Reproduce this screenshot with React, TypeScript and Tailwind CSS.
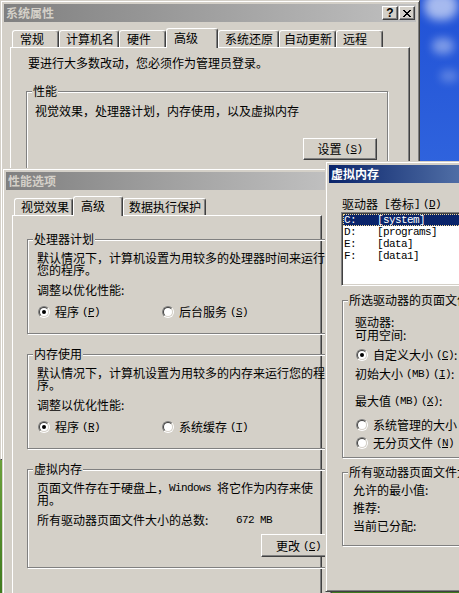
import type { ReactNode } from 'react';

const raised =
  'border border-t-white border-l-white border-r-[#404040] border-b-[#404040] shadow-[inset_-1px_-1px_#808080]';
const sunken =
  'border border-t-[#808080] border-l-[#808080] border-r-white border-b-white shadow-[inset_1px_1px_#404040,inset_-1px_-1px_#d4d0c8]';
// half-width latin text, 6px per character like the bitmap font
const mono = "font-['Liberation_Mono',monospace] text-[11px] leading-[12px] tracking-[-0.6px] align-top";

// pixel X of the classic close button
const closeCells = [
  [0, 1, 6, 7],
  [1, 2, 5, 6],
  [2, 3, 4, 5],
  [3, 4],
  [2, 3, 4, 5],
  [1, 2, 5, 6],
  [0, 1, 6, 7],
];

function Acc({ k }: { k: string }) {
  return (
    <span className={`ml-[3px] ${mono}`}>
      (<span className="underline underline-offset-[1px]">{k}</span>)
    </span>
  );
}

function CapBtn({ children }: { children: ReactNode }) {
  return (
    <div className={`flex h-[14px] w-[16px] items-center justify-center bg-[#d4d0c8] text-black ${raised}`}>
      {children}
    </div>
  );
}

function Win({
  title,
  active,
  help,
  className,
  children,
}: {
  title: string;
  active?: boolean;
  help?: boolean;
  className: string;
  children: ReactNode;
}) {
  return (
    <div
      className={`absolute flex flex-col overflow-hidden border border-t-[#d4d0c8] border-l-[#d4d0c8] border-r-[#404040] border-b-[#404040] bg-[#d4d0c8] p-[3px] shadow-[inset_1px_1px_#fff,inset_-1px_-1px_#808080] ${className}`}
    >
      <div
        className={`flex h-[18px] shrink-0 items-center justify-between pl-[2px] pr-[1px] ${
          active
            ? 'bg-[linear-gradient(to_right,#0a246a,#a6caf0)] text-white'
            : 'bg-[linear-gradient(to_right,#808080,#c0c0c0)] text-[#d4d0c8]'
        }`}
      >
        <span className="font-bold leading-[12px]">{title}</span>
        {help && (
          <div className="flex gap-[1px]">
            <CapBtn>
              <span className="font-['Liberation_Sans',sans-serif] text-[12px] font-bold leading-[10px]">?</span>
            </CapBtn>
            <CapBtn>
              <svg width="8" height="7" viewBox="0 0 8 7" shapeRendering="crispEdges">
                {closeCells.map((row, y) =>
                  row.map((x) => <rect key={`${x}-${y}`} x={x} y={y} width="1" height="1" fill="#000" />)
                )}
              </svg>
            </CapBtn>
          </div>
        )}
      </div>
      {children}
    </div>
  );
}

function Tabs({ items }: { items: { label: string; w: string; sel?: boolean; pl?: string }[] }) {
  return (
    <div className="flex h-[19px] shrink-0 items-start pl-[8px]">
      {items.map((t) => (
        <div
          key={t.label}
          className={`flex shrink-0 rounded-t-[3px] border-t border-l border-r border-t-white border-l-white border-r-[#404040] bg-[#d4d0c8] leading-[12px] shadow-[inset_-1px_0_#808080] ${t.w} ${
            t.sel ? 'relative z-10 h-[20px] pt-[3px]' : 'mt-[2px] h-[17px] pt-[2px]'
          } ${t.pl ?? (t.sel ? 'pl-[7px]' : 'pl-[6px]')}`}
        >
          {t.label}
        </div>
      ))}
    </div>
  );
}

function Group({ label, className, children }: { label: string; className: string; children: ReactNode }) {
  return (
    <div className={`relative border border-[#808080] shadow-[inset_1px_1px_#fff,1px_1px_#fff] ${className}`}>
      <span className="absolute left-[5px] top-[-7px] whitespace-nowrap bg-[#d4d0c8] px-[1px] leading-[12px]">
        {label}
      </span>
      {children}
    </div>
  );
}

function Radio({ checked }: { checked?: boolean }) {
  return (
    <span className="relative ml-[1px] inline-block h-[12px] w-[12px] shrink-0 rounded-full border border-t-[#808080] border-l-[#808080] border-r-white border-b-white">
      <span className="absolute inset-0 flex items-center justify-center rounded-full border border-t-[#404040] border-l-[#404040] border-r-[#d4d0c8] border-b-[#d4d0c8] bg-white">
        {checked && <span className="h-[4px] w-[4px] rounded-full bg-black" />}
      </span>
    </span>
  );
}

function Btn({ className, children }: { className: string; children: ReactNode }) {
  return (
    <div className={`flex shrink-0 items-center justify-center bg-[#d4d0c8] leading-[12px] ${raised} ${className}`}>
      {children}
    </div>
  );
}

function RadioPair({ a, b }: { a: ReactNode; b: ReactNode }) {
  return (
    <div className="mt-[10px] flex h-[12px] items-center leading-[12px]">
      <div className="flex w-[124px] items-center gap-[5px]">
        <Radio checked />
        <span>{a}</span>
      </div>
      <div className="flex items-center gap-[5px]">
        <Radio />
        <span>{b}</span>
      </div>
    </div>
  );
}

export default function App() {
  return (
    <div className="relative h-[593px] w-[459px] overflow-hidden bg-[linear-gradient(to_bottom,#2152d6_0%,#3d74e4_55%,#6a9f3a_78%,#3f7a1e_100%)] font-['Noto_Sans_CJK_SC',sans-serif] text-[12px] text-black">
      <div className="absolute left-[424px] top-[-8px] h-[28px] w-[34px] rounded-full bg-white/60 blur-[5px]" />
      <div className="absolute left-[432px] top-[38px] h-[16px] w-[22px] rounded-full bg-white/40 blur-[4px]" />
      <div className="absolute left-[440px] top-[70px] h-[12px] w-[18px] rounded-full bg-white/25 blur-[4px]" />

      {/* 系统属性 */}
      <Win title="系统属性" help className="left-0 top-0 h-[460px] w-[420px]">
        <div className="mt-[6px] flex flex-1 flex-col">
          <Tabs
            items={[
              { label: '常规', w: 'w-[47px]', pl: 'pl-[7px]' },
              { label: '计算机名', w: 'w-[60px]' },
              { label: '硬件', w: 'w-[47px]', pl: 'pl-[7px]' },
              { label: '高级', w: 'w-[52px]', sel: true },
              { label: '系统还原', w: 'w-[61px]' },
              { label: '自动更新', w: 'w-[57px]', pl: 'pl-[4px]' },
              { label: '远程', w: 'w-[47px]' },
            ]}
          />
          <div className={`mx-[6px] flex-1 px-[15px] pt-[9px] ${raised}`}>
            <div className="ml-[2px] leading-[12px]">要进行大多数改动，您必须作为管理员登录。</div>
            <Group label="性能" className="mt-[22px] h-[110px] w-[362px] pl-[8px] pt-[13px]">
              <div className="leading-[12px]">视觉效果，处理器计划，内存使用，以及虚拟内存</div>
              <div className="mt-[21px] flex justify-end pr-[10px]">
                <Btn className="h-[22px] w-[74px]">
                  设置<Acc k="S" />
                </Btn>
              </div>
            </Group>
          </div>
        </div>
      </Win>

      {/* 性能选项 */}
      <Win title="性能选项" className="left-[2px] top-[168px] h-[440px] w-[330px]">
        <div className="mt-[6px] flex flex-1 flex-col">
          <Tabs
            items={[
              { label: '视觉效果', w: 'w-[59px]' },
              { label: '高级', w: 'w-[50px]', sel: true },
              { label: '数据执行保护', w: 'w-[83px]', pl: 'pl-[5px]' },
            ]}
          />
          <div className={`mx-[6px] flex-1 pl-[14px] pt-[23px] ${raised}`}>
            <Group label="处理器计划" className="w-[320px] whitespace-nowrap pb-[15px] pl-[9px] pt-[12px]">
              <div className="leading-[12px]">
                默认情况下，计算机设置为用较多的处理器时间来运行
                <br />
                您的程序。
              </div>
              <div className="mt-[8px] leading-[12px]">调整以优化性能:</div>
              <RadioPair
                a={
                  <>
                    程序<Acc k="P" />
                  </>
                }
                b={
                  <>
                    后台服务<Acc k="S" />
                  </>
                }
              />
            </Group>

            <Group label="内存使用" className="mt-[20px] w-[320px] whitespace-nowrap pb-[15px] pl-[9px] pt-[12px]">
              <div className="leading-[12px]">
                默认情况下，计算机设置为用较多的内存来运行您的程
                <br />
                序。
              </div>
              <div className="mt-[8px] leading-[12px]">调整以优化性能:</div>
              <RadioPair
                a={
                  <>
                    程序<Acc k="R" />
                  </>
                }
                b={
                  <>
                    系统缓存<Acc k="T" />
                  </>
                }
              />
            </Group>

            <Group label="虚拟内存" className="mt-[20px] w-[320px] whitespace-nowrap pb-[10px] pl-[9px] pt-[12px]">
              <div className="leading-[12px]">
                页面文件存在于硬盘上，<span className={mono}>Windows </span>将它作为内存来使
                <br />
                用。
              </div>
              <div className="mt-[8px] flex leading-[12px]">
                <span className="w-[199px]">所有驱动器页面文件大小的总数:</span>
                <span className={mono}>672 MB</span>
              </div>
              <div className="mt-[8px] flex">
                <Btn className="ml-[224px] h-[23px] w-[75px]">
                  更改<Acc k="C" />
                </Btn>
              </div>
            </Group>
          </div>
        </div>
      </Win>

      {/* 虚拟内存 */}
      <Win title="虚拟内存" active className="left-[325px] top-[161px] h-[431px] w-[300px]">
        <div className="flex flex-col whitespace-nowrap pl-[12px]">
          <div className="ml-[1px] mt-[15px] leading-[12px]">
            驱动器<span className={mono}> [</span>卷标<span className={mono}>]</span>
            <Acc k="D" />
          </div>
          <div className={`mt-[2px] h-[74px] w-[220px] bg-white p-[1px] ${sunken}`}>
            {[
              ['C:', '[system]'],
              ['D:', '[programs]'],
              ['E:', '[data]'],
              ['F:', '[data1]'],
            ].map(([d, v], i) => (
              <div
                key={d}
                className={`flex h-[12px] items-center pl-[1px] ${mono} ${
                  i === 0
                    ? 'bg-[#0a246a] text-white outline-1 outline-offset-[-1px] outline-dotted outline-[#f5db95]'
                    : ''
                }`}
              >
                <span className="w-[33px]">{d}</span>
                <span>{v}</span>
              </div>
            ))}
          </div>

          <Group label="所选驱动器的页面文件大小" className="ml-[1px] mt-[14px] w-[200px] pb-[8px] pl-[12px] pt-[14px]">
            <div className="leading-[13px]">驱动器:</div>
            <div className="leading-[13px]">可用空间:</div>
            <div className="mt-[8px] flex h-[12px] items-center gap-[5px] leading-[12px]">
              <Radio checked />
              <span>
                自定义大小<Acc k="C" />:
              </span>
            </div>
            <div className="mt-[7px] leading-[12px]">
              初始大小<span className={`ml-[3px] ${mono}`}>(MB)</span>
              <Acc k="I" />:
            </div>
            <div className="mt-[15px] leading-[12px]">
              最大值<span className={`ml-[3px] ${mono}`}>(MB)</span>
              <Acc k="X" />:
            </div>
            <div className="mt-[12px] flex h-[12px] items-center gap-[5px] leading-[12px]">
              <Radio />
              <span>系统管理的大小</span>
            </div>
            <div className="mt-[6px] flex h-[12px] items-center gap-[5px] leading-[12px]">
              <Radio />
              <span>
                无分页文件<Acc k="N" />
              </span>
            </div>
          </Group>

          <Group label="所有驱动器页面文件大小总数" className="ml-[1px] mt-[14px] w-[200px] pb-[13px] pl-[10px] pt-[11px]">
            <div className="leading-[12px]">允许的最小值:</div>
            <div className="mt-[6px] leading-[12px]">推荐:</div>
            <div className="mt-[6px] leading-[12px]">当前已分配:</div>
          </Group>
        </div>
      </Win>
    </div>
  );
}
